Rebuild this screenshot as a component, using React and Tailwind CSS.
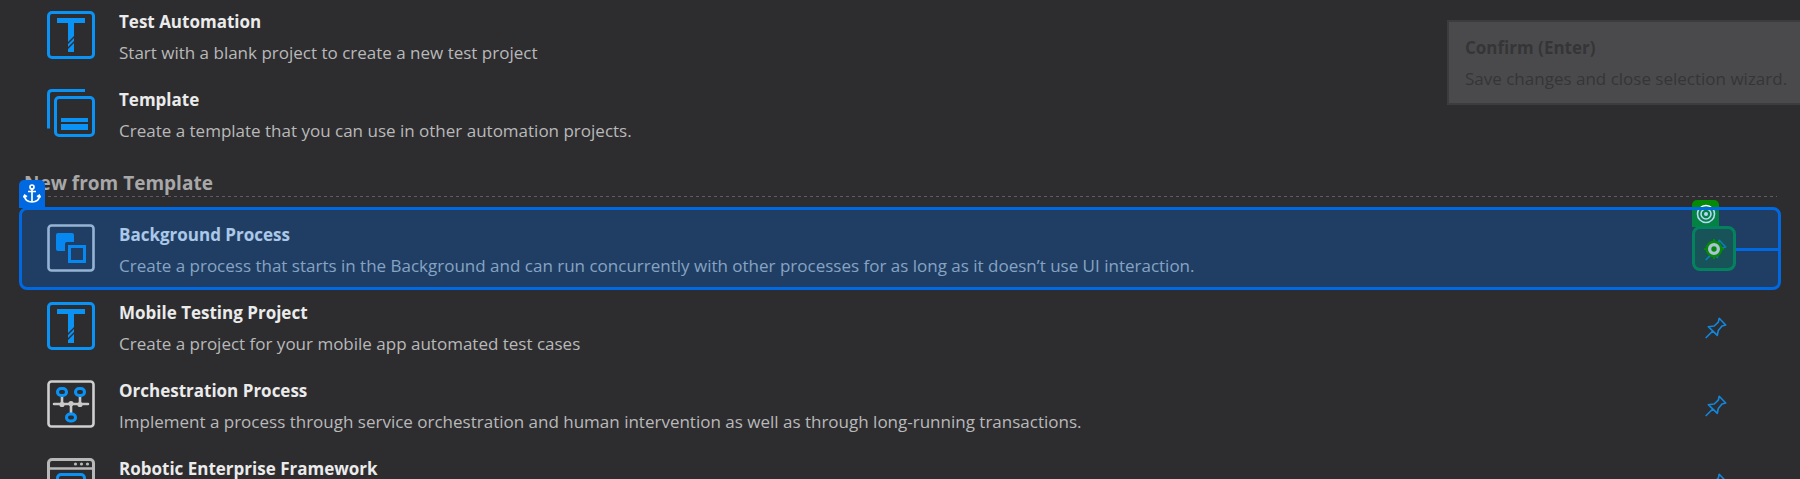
import React from "react";

const BLUE = "#0a93f5";

function TestIcon() {
  return (
    <svg width="48" height="48" viewBox="0 0 48 48" fill="none" aria-hidden="true">
      <rect x="1.5" y="1.5" width="45" height="45" rx="3.5" stroke={BLUE} strokeWidth="3" />
      <path d="M10 7H38V12H27V25L21 31V12H10Z" fill={BLUE} />
      <path d="M21 33L27 27V30L21 36ZM21 38L27 32V41H21Z" fill={BLUE} />
    </svg>
  );
}

function TemplateIcon() {
  return (
    <svg width="48" height="48" viewBox="0 0 48 48" fill="none" aria-hidden="true">
      <path d="M1.5 39.5V5Q1.5 1.5 5 1.5H38" stroke={BLUE} strokeWidth="3" />
      <rect x="8.5" y="8.5" width="38" height="38" rx="3.5" stroke={BLUE} strokeWidth="3" />
      <path d="M14 29H41V33H14ZM14 35H41V41H14Z" fill={BLUE} />
    </svg>
  );
}

function BackgroundIcon() {
  return (
    <svg width="48" height="48" viewBox="0 0 48 48" fill="none" aria-hidden="true">
      <rect x="1.5" y="1.5" width="45" height="45" rx="3" stroke="#cfcfcf" strokeWidth="2.6" />
      <path d="M11 9H25Q27 9 27 11V18H20Q18 18 18 20V27H11Q9 27 9 25V11Q9 9 11 9Z" fill={BLUE} />
      <rect x="22.5" y="22.5" width="15" height="15" stroke={BLUE} strokeWidth="3" />
    </svg>
  );
}

function OrchestrationIcon() {
  return (
    <svg width="48" height="48" viewBox="0 0 48 48" fill="none" aria-hidden="true">
      <rect x="1.5" y="1.5" width="45" height="45" rx="3" stroke="#cfcfcf" strokeWidth="2.6" />
      <path d="M7 24H41M15 16V24M33 16V24M24 24V33" stroke="#c8c8c8" strokeWidth="2.6" strokeLinecap="round" />
      <circle cx="15" cy="24.5" r="2.6" fill="#c8c8c8" />
      <circle cx="24" cy="23.5" r="2.6" fill="#c8c8c8" />
      <circle cx="33" cy="24.5" r="2.6" fill="#c8c8c8" />
      <rect x="10.5" y="8.5" width="9" height="7" rx="3.5" stroke={BLUE} strokeWidth="3" />
      <rect x="28.5" y="8.5" width="9" height="7" rx="3.5" stroke={BLUE} strokeWidth="3" />
      <rect x="19.5" y="34" width="9" height="7" rx="3.5" stroke={BLUE} strokeWidth="3" />
    </svg>
  );
}

function FrameworkIcon() {
  return (
    <svg width="48" height="48" viewBox="0 0 48 48" fill="none" aria-hidden="true">
      <rect x="1.5" y="1.5" width="45" height="45" rx="3.5" stroke="#b8b8b8" strokeWidth="3" />
      <path d="M2 10.5H46" stroke="#b8b8b8" strokeWidth="2.6" />
      <circle cx="28.5" cy="6" r="1.6" fill="#b8b8b8" />
      <circle cx="34.5" cy="6" r="1.6" fill="#b8b8b8" />
      <circle cx="40.5" cy="6" r="1.6" fill="#b8b8b8" />
      <rect x="10.5" y="16.5" width="27" height="22" rx="3.5" stroke={BLUE} strokeWidth="3" />
    </svg>
  );
}

function PinIcon() {
  return (
    <svg width="22" height="22" viewBox="0 0 22 22" fill="none" stroke="#1287dc" strokeWidth="1.6" strokeLinejoin="round" aria-hidden="true">
      <path d="M0.7 21L7.5 14.2M3.3 9.7L12.3 18.3L13.3 13.5L17 9L20.7 8L14.2 1.3L13.3 5.2L9.2 9Z" />
    </svg>
  );
}

function AnchorIcon() {
  return (
    <svg width="18" height="20" viewBox="0 0 18 20" fill="none" stroke="#fff" strokeWidth="1.7" aria-hidden="true">
      <circle cx="9" cy="3" r="2" />
      <path d="M9 5V18M5 7.5H13M1.5 11.5Q2 18 9 18Q16 18 16.5 11.5M0.5 13.5L1.7 11.2L4 12.7M17.5 13.5L16.3 11.2L14 12.7" />
    </svg>
  );
}

function TargetIcon() {
  return (
    <svg width="20" height="20" viewBox="0 0 20 20" fill="none" stroke="#fff" strokeWidth="1.6" aria-hidden="true">
      <circle cx="10" cy="10" r="8.5" />
      <circle cx="10" cy="10" r="5" />
      <circle cx="10" cy="10" r="2" fill="#fff" stroke="none" />
    </svg>
  );
}

function CrosshairIcon() {
  return (
    <svg width="22" height="22" viewBox="0 0 22 22" fill="none" aria-hidden="true">
      <path d="M11 1V21M1 11H21" stroke="#088808" strokeWidth="2" />
      <circle cx="11" cy="11" r="7.2" fill="#a9c4d6" stroke="#088808" strokeWidth="2.4" />
      <circle cx="11" cy="11" r="2.7" fill="#088808" />
    </svg>
  );
}

function ProjectRow({ icon, title, text, pin, children }) {
  return (
    <li className="relative flex h-[78px] items-center pr-[73px] pl-[47px]">
      {icon}
      <a href="#" className="mt-1 ml-6 flex min-h-[55px] grow flex-col gap-[7px]">
        <span className="text-[17px] leading-6 font-bold text-[#ebebeb]">{title}</span>
        {text && <span className="text-[17px] leading-6 text-[#b9b9b9]">{text}</span>}
      </a>
      {pin && (
        <button type="button" className="mt-1" aria-label={"Pin " + title}>
          <PinIcon />
        </button>
      )}
      {children}
    </li>
  );
}

function SelectionOverlay() {
  return (
    <>
      <div className="pointer-events-none absolute top-[-9px] right-[81px] z-10 flex h-[27px] w-[27px] items-center justify-center rounded-t-[5px] bg-[#058a05]">
        <TargetIcon />
      </div>
      <div className="pointer-events-none absolute top-[17px] right-[64px] z-10 h-[45px] w-[44px] rounded-lg border-3 border-[#058a28] bg-[#058a05]/30" />
      <div className="pointer-events-none absolute top-[-2px] right-[19px] bottom-[-3px] left-[19px] z-20 rounded-lg border-3 border-[#0068e0] bg-[#006ae6]/28">
        <div className="absolute top-[38px] right-0 h-[3px] w-[42px] bg-[#0068e0]" />
      </div>
      <div className="pointer-events-none absolute top-[17px] right-[64px] z-30 flex h-[45px] w-[44px] items-center justify-center">
        <CrosshairIcon />
      </div>
      <div className="pointer-events-none absolute top-[-29px] left-[19px] z-20 flex h-[28px] w-[26px] items-center justify-center rounded-t-[5px] bg-[#0068e0]">
        <AnchorIcon />
      </div>
    </>
  );
}

export default function App() {
  return (
    <main className="relative h-screen overflow-hidden bg-[#2d2d30] font-['Open_Sans',sans-serif]">
      <ul className="-mt-1">
        <ProjectRow icon={<TestIcon />} title="Test Automation" text="Start with a blank project to create a new test project" />
        <ProjectRow icon={<TemplateIcon />} title="Template" text="Create a template that you can use in other automation projects." />
      </ul>

      <div className="mr-[23px] ml-6 pt-[19px]">
        <h2 className="text-[19px] leading-[25px] font-bold text-[#a8a8a8]">New from Template</h2>
        <svg className="block w-full" height="1" aria-hidden="true">
          <line x1="0" y1="0.5" x2="100%" y2="0.5" stroke="#5e5e60" strokeDasharray="3 3" />
        </svg>
      </div>

      <ul className="mt-3">
        <ProjectRow
          pin
          icon={<BackgroundIcon />}
          title="Background Process"
          text="Create a process that starts in the Background and can run concurrently with other processes for as long as it doesn’t use UI interaction."
        >
          <SelectionOverlay />
        </ProjectRow>
        <ProjectRow pin icon={<TestIcon />} title="Mobile Testing Project" text="Create a project for your mobile app automated test cases" />
        <ProjectRow
          pin
          icon={<OrchestrationIcon />}
          title="Orchestration Process"
          text="Implement a process through service orchestration and human intervention as well as through long-running transactions."
        />
        <ProjectRow pin icon={<FrameworkIcon />} title="Robotic Enterprise Framework" />
      </ul>

      <aside
        role="tooltip"
        className="absolute top-5 right-[-4px] flex w-[357px] flex-col gap-[7px] border-2 border-[#3c3c3e] bg-[#4a4a4c] px-4 pt-[14px] pb-3 text-[17px] leading-6 whitespace-nowrap text-[#353537]"
      >
        <strong>Confirm (Enter)</strong>
        <span>Save changes and close selection wizard.</span>
      </aside>
    </main>
  );
}
